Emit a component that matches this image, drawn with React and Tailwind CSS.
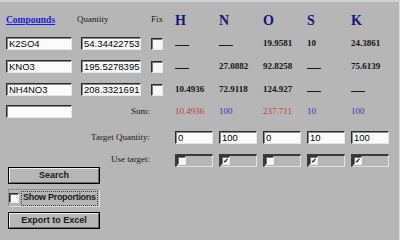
import React from "react";

// 원소 열 정의
const elements = ["H", "N", "O", "S", "K"];

const rows = [
  { name: "K2SO4", qty: "54.34422753", vals: ["—", "—", "19.9581", "10", "24.3861"] },
  { name: "KNO3", qty: "195.5278395", vals: ["—", "27.0882", "92.8258", "—", "75.6139"] },
  { name: "NH4NO3", qty: "208.3321691", vals: ["10.4936", "72.9118", "124.927", "—", "—"] },
];

const sums = [
  { v: "10.4936", c: "text-[#c83a3a]" },
  { v: "100", c: "text-[#3838c0]" },
  { v: "237.711", c: "text-[#c83a3a]" },
  { v: "10", c: "text-[#3838c0]" },
  { v: "100", c: "text-[#3838c0]" },
];

const targets = ["0", "100", "0", "10", "100"];
const useTarget = [false, true, false, true, true];

const serif = "font-['Liberation_Serif','Times_New_Roman',serif]";
const sans = "font-['Liberation_Sans',Arial,sans-serif]";

// 움푹 들어간 입력창
function Field({ value, className = "" }) {
  return (
    <div
      className={`h-[13px] bg-[#fbfbfb] border border-t-[#2a2a2a] border-l-[#2a2a2a] border-r-[#e6e6e6] border-b-[#e6e6e6] shadow-[inset_1px_1px_0_#8a8a8a] pl-[2px] flex items-center text-[9.5px] leading-none text-black ${sans} ${className}`}
    >
      {value}
    </div>
  );
}

function Check({ checked, size = "w-[12px] h-[12px]" }) {
  return (
    <div
      className={`${size} shrink-0 bg-[#f6f6f6] border border-t-[#2a2a2a] border-l-[#2a2a2a] border-r-[#e8e8e8] border-b-[#e8e8e8] shadow-[inset_1px_1px_0_#7a7a7a] flex items-center justify-center text-[7px] font-bold leading-none text-black ${sans}`}
    >
      {checked ? "✓" : ""}
    </div>
  );
}

function Cell({ v }) {
  if (v === "—") {
    return (
      <div className="w-[44px] flex items-center">
        <div className="w-[14px] h-px bg-[#1a1a1a] mt-[3px]" />
      </div>
    );
  }
  return (
    <div className={`w-[44px] text-[9px] font-bold text-[#141414] ${serif}`}>{v}</div>
  );
}

function Button({ children }) {
  return (
    <div className="w-[92px] h-[17px] border border-black bg-[#b6b6b6] flex">
      <div
        className={`flex-1 flex items-center justify-center border border-t-[#f0f0f0] border-l-[#f0f0f0] border-r-[#6a6a6a] border-b-[#6a6a6a] text-[9px] font-bold text-[#1a1a1a] ${sans}`}
      >
        {children}
      </div>
    </div>
  );
}

export default function App() {
  return (
    <div className="w-[400px] h-[240px] bg-[#b6b6b6] border-t-2 border-t-[#d2d2d2] border-r border-r-[#dcdcdc] pl-[6px] pt-[8px] overflow-hidden">
      {/* 헤더 */}
      <div className="flex items-center h-[20px]">
        <div className={`w-[75px] text-[9.5px] font-bold text-[#1a1ae0] underline ${serif}`}>
          Compounds
        </div>
        <div className={`w-[74px] -ml-[4px] text-[9px] text-[#1a1a1a] ${serif}`}>Quantity</div>
        <div className={`w-[24px] text-[9px] text-[#1a1a1a] ${serif}`}>Fix</div>
        {elements.map((e) => (
          <div key={e} className={`w-[44px] text-[14px] font-bold text-[#141480] ${serif}`}>
            {e}
          </div>
        ))}
      </div>

      {/* 화합물 행 */}
      <div className="flex flex-col gap-[10px] mt-[7px]">
        {rows.map((r) => (
          <div key={r.name} className="flex items-center h-[13px]">
            <Field value={r.name} className="w-[66px]" />
            <Field value={r.qty} className="w-[60px] ml-[9px]" />
            <div className="ml-[10px] mr-[12px]">
              <Check />
            </div>
            {r.vals.map((v, i) => (
              <Cell key={i} v={v} />
            ))}
          </div>
        ))}

        {/* 합계 */}
        <div className="flex items-center h-[13px] -mt-[1px]">
          <Field value="" className="w-[66px]" />
          <div className={`w-[78px] text-right text-[9px] text-[#1a1a1a] ${serif}`}>Sum:</div>
          <div className="w-[25px]" />
          {sums.map((s, i) => (
            <div key={i} className={`w-[44px] text-[9px] ${s.c} ${serif}`}>
              {s.v}
            </div>
          ))}
        </div>
      </div>

      {/* 목표량 */}
      <div className="flex items-center h-[13px] mt-[13px]">
        <div className={`w-[144px] text-right text-[9px] text-[#1a1a1a] ${serif}`}>Target Quantity:</div>
        <div className="w-[25px]" />
        {targets.map((t, i) => (
          <div key={i} className="w-[44px]">
            <Field value={t} className="w-[38px]" />
          </div>
        ))}
      </div>

      <div className="flex items-center h-[12px] mt-[10px]">
        <div className={`w-[144px] text-right text-[9px] text-[#1a1a1a] ${serif}`}>Use target:</div>
        <div className="w-[25px]" />
        {useTarget.map((u, i) => (
          <div key={i} className="w-[44px]">
            <div className="w-[38px] h-[13px] border-t-2 border-l-2 border-r border-b border-t-[#3a3a3a] border-l-[#3a3a3a] border-r-[#e2e2e2] border-b-[#e2e2e2] flex items-center">
              <Check checked={u} size="w-[9px] h-[9px]" />
            </div>
          </div>
        ))}
      </div>

      {/* 버튼 */}
      <div className="flex flex-col gap-[6px] ml-[2px] mt-[1px]">
        <Button>Search</Button>
        <div className="w-[92px] h-[18px] border border-t-[#8e8e8e] border-l-[#8e8e8e] border-r-[#dcdcdc] border-b-[#dcdcdc] flex items-center -my-[1px]">
          <Check size="w-[10px] h-[10px]" />
          <div
            className={`ml-[2px] px-[1px] h-[15px] flex items-center whitespace-nowrap border border-dotted border-[#3a3a3a] text-[9px] font-bold tracking-[-0.3px] text-[#1a1a1a] ${sans}`}
          >
            Show Proportions
          </div>
        </div>
        <Button>Export to Excel</Button>
      </div>
    </div>
  );
}
